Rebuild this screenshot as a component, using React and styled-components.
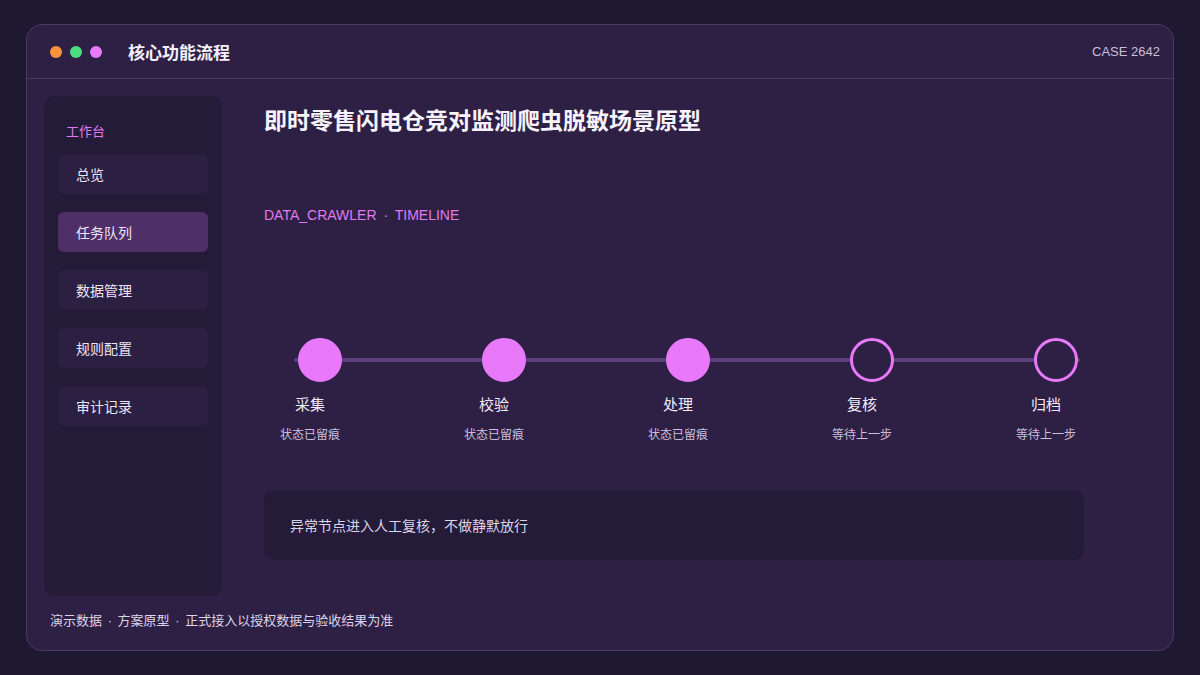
import React from "react";
import styled, { createGlobalStyle } from "styled-components";

const GlobalStyle = createGlobalStyle`
  html, body {
    margin: 0;
    padding: 0;
    background: #1e1830;
  }
  body {
    font-family: "Liberation Sans", "Noto Sans CJK SC", sans-serif;
    color: #f1ebf8;
  }
`;

const Page = styled.div`
  width: 1200px;
  height: 675px;
  padding: 24px 26px;
  box-sizing: border-box;
`;

const Window = styled.div`
  height: 100%;
  display: flex;
  flex-direction: column;
  background: #2e2045;
  border: 1px solid #4a3a66;
  border-radius: 16px;
  box-sizing: border-box;
  overflow: hidden;
`;

const Header = styled.header`
  height: 54px;
  flex-shrink: 0;
  display: flex;
  align-items: center;
  padding: 0 13px 0 23px;
  border-bottom: 1px solid #4a3a66;
  box-sizing: border-box;
`;

const Dots = styled.div`
  display: flex;
  gap: 8px;
  margin-right: 26px;
`;

const Dot = styled.span`
  width: 12px;
  height: 12px;
  border-radius: 50%;
  background: ${(p) => p.color};
`;

const WindowTitle = styled.div`
  font-size: 17px;
  font-weight: 700;
  color: #f5f0fb;
  flex: 1;
`;

const CaseTag = styled.div`
  font-size: 13px;
  color: #c9bedb;
`;

const Body = styled.div`
  flex: 1;
  display: flex;
  gap: 42px;
  padding: 17px 17px 0 17px;
  min-height: 0;
`;

const Sidebar = styled.nav`
  width: 178px;
  flex-shrink: 0;
  background: #241b38;
  border-radius: 10px;
  padding: 28px 14px;
  box-sizing: border-box;
  display: flex;
  flex-direction: column;
  gap: 18px;
`;

const SideLabel = styled.div`
  font-size: 13px;
  line-height: 16px;
  color: #e07af0;
  padding-left: 8px;
  margin-bottom: -4px;
`;

const NavItem = styled.div`
  height: 40px;
  display: flex;
  align-items: center;
  padding-left: 18px;
  border-radius: 6px;
  font-size: 14px;
  color: #ece4f5;
  background: ${(p) => (p.active ? "#4f2f68" : "#2c2042")};
`;

const Main = styled.main`
  flex: 1;
  padding-top: 11px;
  display: flex;
  flex-direction: column;
`;

const Title = styled.h1`
  margin: 0;
  font-size: 23px;
  line-height: 28px;
  font-weight: 700;
  color: #f7f2fc;
`;

const Subtitle = styled.div`
  margin-top: 71px;
  font-size: 14px;
  line-height: 18px;
  color: #e07af0;
`;

const Sep = styled.span`
  margin: 0 ${(p) => p.space || 3}px;
`;

const Timeline = styled.div`
  position: relative;
  width: 816px;
  margin-top: 114px;
  margin-left: 6px;
  display: flex;
  justify-content: space-between;
`;

const Track = styled.div`
  position: absolute;
  left: 24px;
  right: 6px;
  top: 20px;
  height: 4px;
  border-radius: 2px;
  background: #5a3f7a;
`;

const Step = styled.div`
  position: relative;
  width: 80px;
  display: flex;
  flex-direction: column;
  align-items: center;
`;

const Node = styled.div`
  width: 44px;
  height: 44px;
  margin-left: 20px;
  border-radius: 50%;
  box-sizing: border-box;
  background: ${(p) => (p.done ? "#e879f9" : "#2e2045")};
  border: 3px solid #e879f9;
`;

const StepName = styled.div`
  margin-top: 13px;
  font-size: 15px;
  line-height: 20px;
  color: #f1ebf8;
`;

const StepState = styled.div`
  margin-top: 12px;
  font-size: 12px;
  line-height: 16px;
  color: #cbbfdb;
`;

const Note = styled.div`
  margin-top: 47px;
  width: 820px;
  height: 70px;
  box-sizing: border-box;
  background: #241b38;
  border-radius: 10px;
  display: flex;
  align-items: center;
  padding: 0 26px;
  font-size: 14px;
  color: #ddd3ea;
`;

const Footer = styled.footer`
  padding: 16px 23px 20px;
  font-size: 13px;
  line-height: 18px;
  color: #ddd3ea;
`;

const navItems = ["总览", "任务队列", "数据管理", "规则配置", "审计记录"];

const steps = [
  { name: "采集", state: "状态已留痕", done: true },
  { name: "校验", state: "状态已留痕", done: true },
  { name: "处理", state: "状态已留痕", done: true },
  { name: "复核", state: "等待上一步", done: false },
  { name: "归档", state: "等待上一步", done: false },
];

export default function App() {
  return (
    <>
      <GlobalStyle />
      <Page>
        <Window>
          <Header>
            <Dots>
              <Dot color="#fb923c" />
              <Dot color="#4ade80" />
              <Dot color="#e879f9" />
            </Dots>
            <WindowTitle>核心功能流程</WindowTitle>
            <CaseTag>CASE 2642</CaseTag>
          </Header>
          <Body>
            <Sidebar>
              <SideLabel>工作台</SideLabel>
              {navItems.map((item) => (
                <NavItem key={item} active={item === "任务队列"}>
                  {item}
                </NavItem>
              ))}
            </Sidebar>
            <Main>
              <Title>即时零售闪电仓竞对监测爬虫脱敏场景原型</Title>
              <Subtitle>
                DATA_CRAWLER <Sep space={3}>·</Sep> TIMELINE
              </Subtitle>
              <Timeline>
                <Track />
                {steps.map((s) => (
                  <Step key={s.name}>
                    <Node done={s.done} />
                    <StepName>{s.name}</StepName>
                    <StepState>{s.state}</StepState>
                  </Step>
                ))}
              </Timeline>
              <Note>异常节点进入人工复核，不做静默放行</Note>
            </Main>
          </Body>
          <Footer>
            演示数据 <Sep space={2}>·</Sep> 方案原型 <Sep space={2}>·</Sep> 正式接入以授权数据与验收结果为准
          </Footer>
        </Window>
      </Page>
    </>
  );
}
